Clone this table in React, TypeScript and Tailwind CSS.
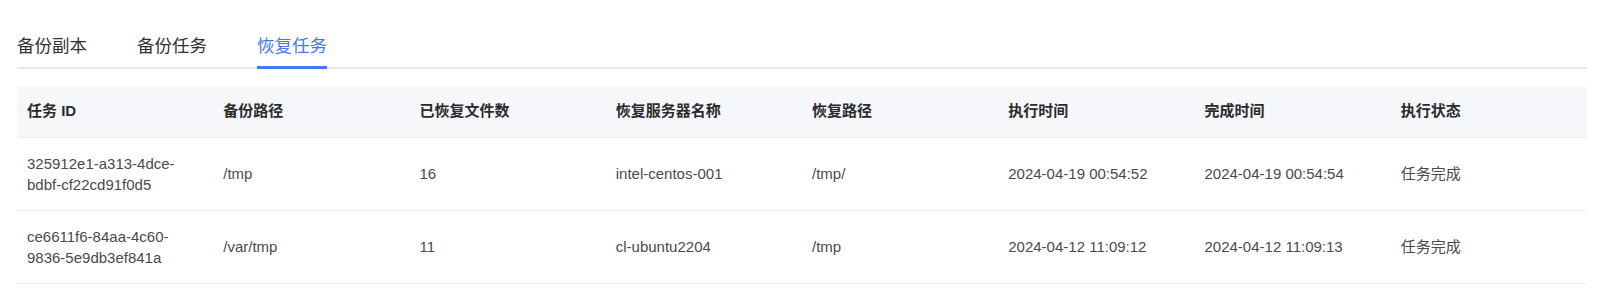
import { useState } from "react";

const tabs = ["备份副本", "备份任务", "恢复任务"];

const columns = ["任务 ID", "备份路径", "已恢复文件数", "恢复服务器名称", "恢复路径", "执行时间", "完成时间", "执行状态"];

const rows = [
	["325912e1-a313-4dce-bdbf-cf22cd91f0d5", "/tmp", "16", "intel-centos-001", "/tmp/", "2024-04-19 00:54:52", "2024-04-19 00:54:54", "任务完成"],
	["ce6611f6-84aa-4c60-9836-5e9db3ef841a", "/var/tmp", "11", "cl-ubuntu2204", "/tmp", "2024-04-12 11:09:12", "2024-04-12 11:09:13", "任务完成"],
];

export default function App() {
	const [active, setActive] = useState(2);

	return (
		<div className="min-h-[297px] bg-white pt-[25px] font-['Liberation_Sans','Noto_Sans_CJK_SC',sans-serif]">
			<div className="ml-[17px] w-[1570px]">
				<div className="flex gap-[50px] border-b-2 border-[#e4e7ed]">
					{tabs.map((t, i) => (
						<button
							key={t}
							onClick={() => setActive(i)}
							className={`relative h-[42px] text-[17.5px] leading-[40px] ${i === active ? "text-[#3e7bf5]" : "text-[#303133]"}`}
						>
							{t}
							{i === active && <span className="absolute bottom-[-2px] left-0 right-0 h-[3px] bg-[#3e7bf5]" />}
						</button>
					))}
				</div>

				<table className="mt-[17px] w-full table-fixed border-collapse text-[15px]">
					<thead>
						<tr className="bg-[#f5f7fa]">
							{columns.map((c) => (
								<th key={c} className="h-[51px] border-b border-[#ebeef5] px-[10px] text-left font-bold text-[#2b2b2b]">
									{c}
								</th>
							))}
						</tr>
					</thead>
					<tbody>
						{rows.map((r) => (
							<tr key={r[0]}>
								{r.map((v, j) => (
									<td key={j} className="border-b border-[#ebeef5] px-[10px] py-[15px] align-middle leading-[21px] text-[#4a4a4a] break-words">
										{v}
									</td>
								))}
							</tr>
						))}
					</tbody>
				</table>
			</div>
		</div>
	);
}
